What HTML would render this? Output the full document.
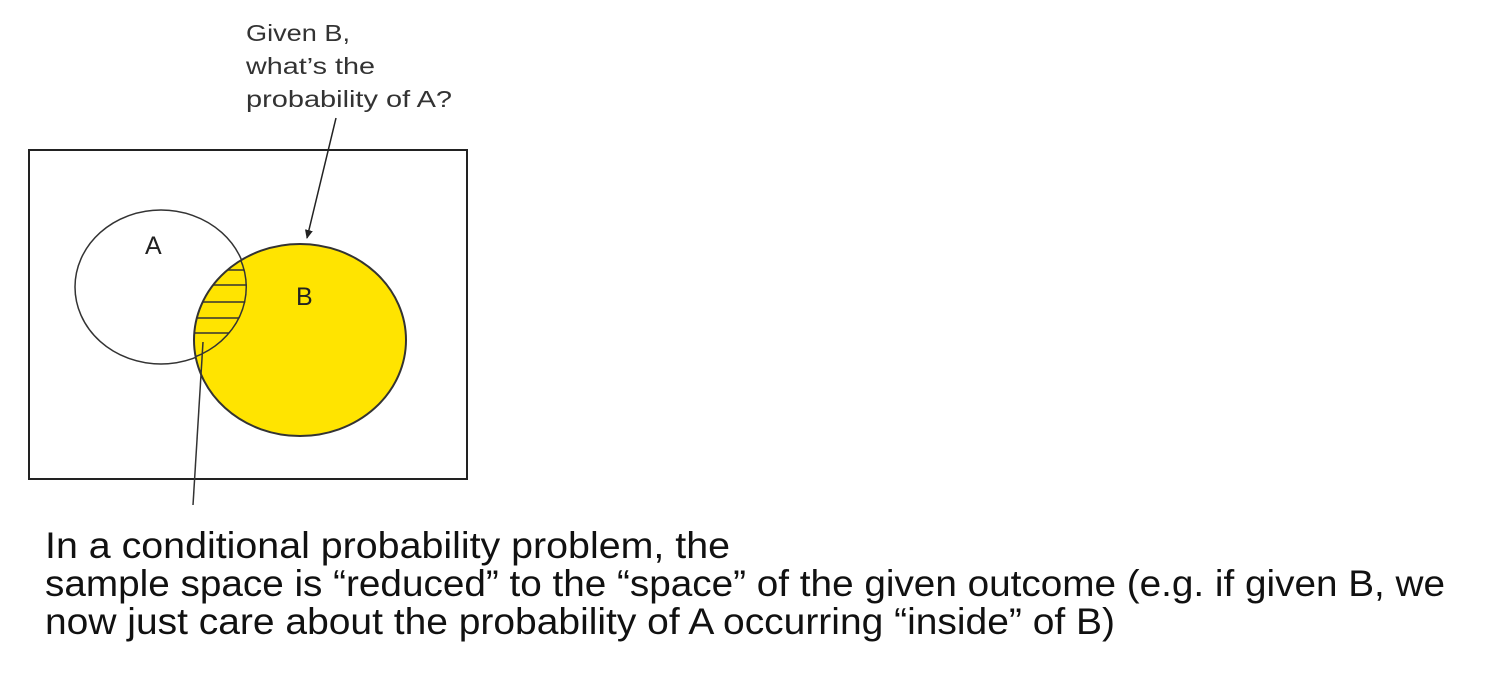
<!DOCTYPE html>
<html><head><style>html,body{margin:0;padding:0;background:#fff;}svg{display:block}</style></head>
<body>
<svg width="1492" height="688" xmlns="http://www.w3.org/2000/svg" font-family="'Liberation Sans', sans-serif">
<defs>
<clipPath id="ca"><ellipse cx="161" cy="287" rx="86" ry="77"/></clipPath>
<clipPath id="cb"><ellipse cx="300" cy="340" rx="106" ry="96"/></clipPath>
<marker id="ar" markerWidth="10" markerHeight="10" refX="8" refY="5" orient="auto" markerUnits="userSpaceOnUse"><path d="M0,1 L9,5 L0,9 z" fill="#222"/></marker>
</defs>
<rect x="29" y="150" width="438" height="329" fill="none" stroke="#222" stroke-width="2"/>
<ellipse cx="161" cy="287" rx="86" ry="77" fill="none" stroke="#333" stroke-width="1.5"/>
<ellipse cx="300" cy="340" rx="106" ry="96" fill="#ffe400" stroke="#333" stroke-width="2"/>
<g clip-path="url(#cb)"><g clip-path="url(#ca)" stroke="#333" stroke-width="1.5">
<ellipse cx="161" cy="287" rx="86" ry="77" fill="none" stroke-width="3"/>
<line x1="190" y1="270" x2="250" y2="270"/>
<line x1="190" y1="285" x2="250" y2="285"/>
<line x1="190" y1="302" x2="250" y2="302"/>
<line x1="190" y1="318" x2="250" y2="318"/>
<line x1="190" y1="333" x2="250" y2="333"/>
</g></g>
<text x="145" y="254" font-size="25" fill="#222">A</text>
<text x="296" y="305" font-size="25" fill="#222">B</text>
<line x1="336" y1="118" x2="307" y2="238" stroke="#222" stroke-width="1.5" marker-end="url(#ar)"/>
<line x1="203" y1="342" x2="193" y2="505" stroke="#333" stroke-width="1.5"/>
<g font-size="23" fill="#333">
<text x="246" y="41" textLength="104" lengthAdjust="spacingAndGlyphs">Given B,</text>
<text x="246" y="74" textLength="129" lengthAdjust="spacingAndGlyphs">what’s the</text>
<text x="246" y="107" textLength="206" lengthAdjust="spacingAndGlyphs">probability of A?</text>
</g>
<g font-size="37" fill="#111">
<text x="45" y="558" textLength="685" lengthAdjust="spacingAndGlyphs">In a conditional probability problem, the</text>
<text x="45" y="596" textLength="1400" lengthAdjust="spacingAndGlyphs">sample space is “reduced” to the “space” of the given outcome (e.g. if given B, we</text>
<text x="45" y="634" textLength="1070" lengthAdjust="spacingAndGlyphs">now just care about the probability of A occurring “inside” of B)</text>
</g>
</svg>
</body></html>
